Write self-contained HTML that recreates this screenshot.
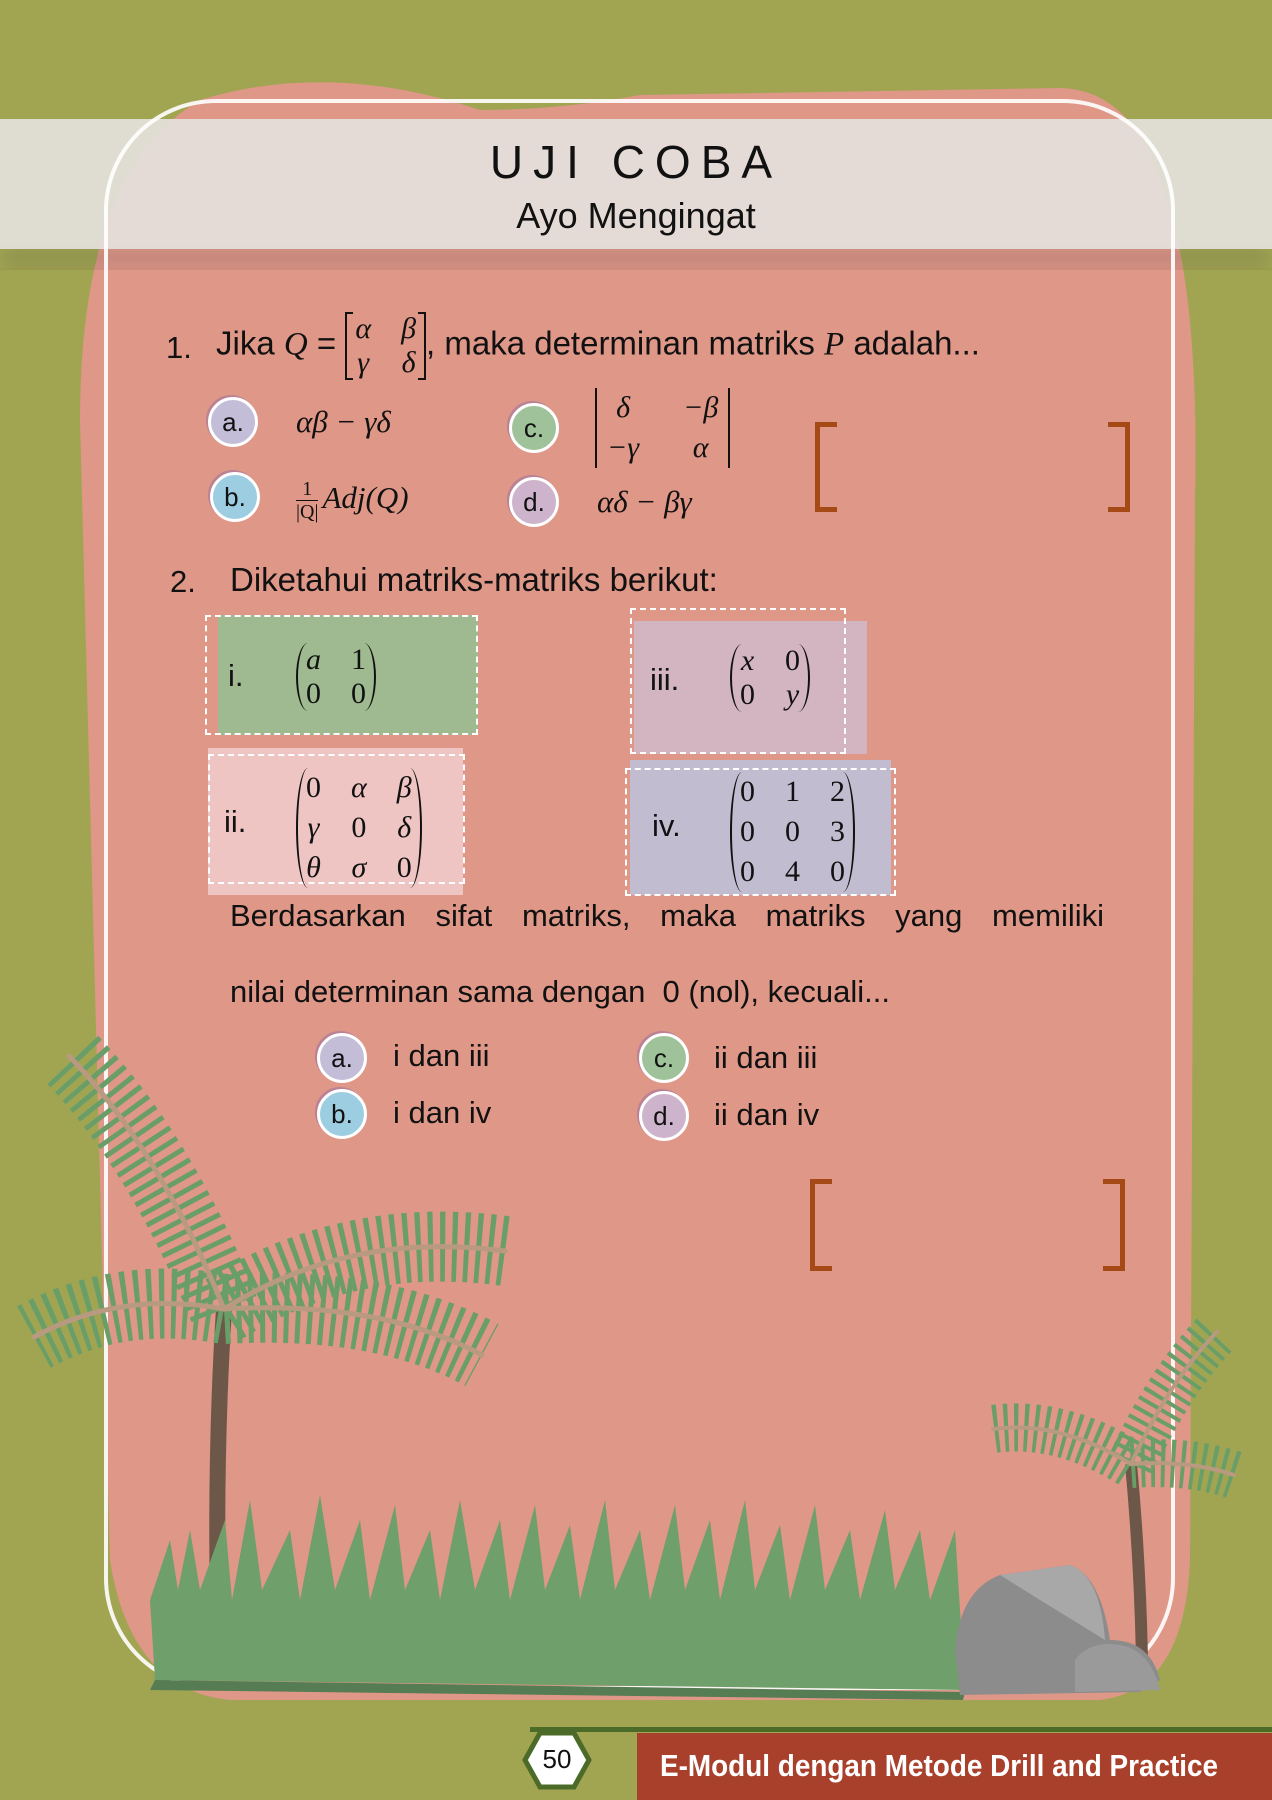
<!DOCTYPE html>
<html><head><meta charset="utf-8"><style>
*{margin:0;padding:0;box-sizing:border-box}
body{width:1272px;height:1800px;position:relative;overflow:hidden;background:#a1a552;font-family:"Liberation Sans",sans-serif;color:#111}
.a{position:absolute}
.t{position:absolute;font-size:31px;white-space:nowrap}
.m{font-family:"Liberation Serif",serif;font-style:italic}
.c{position:absolute;width:50px;height:50px;border-radius:50%;border:3px solid #fff;box-shadow:-2px -2px 0 rgba(150,110,160,.5);font-size:26px;text-align:center;line-height:44px}
.mat{display:inline-grid;position:relative;padding:0 10px;font-family:"Liberation Serif",serif;font-size:30px;line-height:34px;vertical-align:middle;column-gap:30px;text-align:center}
.mat i{font-style:italic}
.mat.p::before,.mat.p::after{content:"";position:absolute;top:0;bottom:0;width:10px;border:2px solid #111}
.mat.p::before{left:0;border-right:none;border-top:none;border-bottom:none;border-radius:12px 0 0 12px/50%}
.mat.p::after{right:0;border-left:none;border-top:none;border-bottom:none;border-radius:0 12px 12px 0/50%}
.mat.b::before,.mat.b::after{content:"";position:absolute;top:0;bottom:0;width:6px;border:2px solid #111}
.mat.b::before{left:0;border-right:none}.mat.b::after{right:0;border-left:none}
.mat.d{border-left:2px solid #111;border-right:2px solid #111}
.box{position:absolute}
.dash{position:absolute;border:2px dashed #fff}
.br{position:absolute;width:22px;border:5px solid #a54a16}
</style></head><body>
<svg class="a" style="left:0;top:0" width="1272" height="1800">
<defs><filter id="sh"><feGaussianBlur stdDeviation="10"/></filter></defs>
<path d="M200 100 Q330 60 480 110 Q560 110 640 95 L1060 88 Q1130 90 1160 180 Q1200 280 1195 500 L1190 1560 Q1185 1690 1100 1700 L230 1700 Q130 1690 110 1560 L80 420 Q80 170 200 100Z" fill="#df9788"/>
<rect x="0" y="248" width="1272" height="20" fill="rgba(60,40,30,.18)" filter="url(#sh)"/>
</svg>
<div class="a" style="left:0;top:119px;width:1272px;height:130px;background:rgba(230,226,223,.9)"></div>
<svg class="a" style="left:0;top:0" width="1272" height="1800"><rect x="106" y="101" width="1067" height="1587" rx="110" fill="none" stroke="rgba(255,255,255,.9)" stroke-width="4"/></svg>
<div class="a" style="left:0;top:132px;width:1272px;text-align:center;font-size:46px;letter-spacing:10px;line-height:60px">UJI COBA</div>
<div class="a" style="left:0;top:192px;width:1272px;text-align:center;font-size:36px;line-height:48px">Ayo Mengingat</div>

<div class="t" style="left:166px;top:330px">1.</div>
<div class="t" style="left:216px;top:312px;line-height:60px;font-size:33px">Jika <span class="m">Q</span> = <span class="mat b" style="grid-template-columns:auto auto"><i>α</i><i>β</i><i>γ</i><i>δ</i></span>, maka determinan matriks <span class="m">P</span> adalah...</div>
<div class="c" style="left:208px;top:397px;background:#c3bdd7">a.</div>
<div class="c" style="left:210px;top:472px;background:#9ccde0">b.</div>
<div class="c" style="left:509px;top:403px;background:#9fc29a">c.</div>
<div class="c" style="left:509px;top:477px;background:#cdb3cb">d.</div>
<div class="t m" style="left:296px;top:404px">αβ − γδ</div>
<div class="t m" style="left:296px;top:478px;line-height:40px"><span style="display:inline-block;vertical-align:middle;text-align:center;font-size:20px;line-height:22px;margin-right:4px;font-style:normal"><span style="display:block;border-bottom:1.5px solid #111">1</span>|Q|</span>Adj(Q)</div>
<div class="t" style="left:595px;top:388px"><span class="mat d" style="grid-template-columns:auto auto;column-gap:44px;line-height:40px"><i>δ</i><i>−β</i><i>−γ</i><i>α</i></span></div>
<div class="t m" style="left:597px;top:484px">αδ − βγ</div>
<div class="br" style="left:815px;top:422px;height:90px;border-right:none"></div>
<div class="br" style="left:1108px;top:422px;height:90px;border-left:none"></div>

<div class="t" style="left:170px;top:564px">2.</div>
<div class="t" style="left:230px;top:561px;font-size:33px">Diketahui matriks-matriks berikut:</div>
<div class="box" style="left:218px;top:615px;width:260px;height:120px;background:#9fba90"></div>
<div class="dash" style="left:205px;top:615px;width:273px;height:120px"></div>
<div class="t" style="left:228px;top:658px">i.</div>
<div class="t" style="left:296px;top:643px"><span class="mat p" style="grid-template-columns:auto auto"><i>a</i><span>1</span><span>0</span><span>0</span></span></div>

<div class="box" style="left:634px;top:621px;width:233px;height:133px;background:#d2b5c0"></div>
<div class="dash" style="left:630px;top:608px;width:216px;height:146px"></div>
<div class="t" style="left:650px;top:662px">iii.</div>
<div class="t" style="left:730px;top:644px"><span class="mat p" style="grid-template-columns:auto auto"><i>x</i><span>0</span><span>0</span><i>y</i></span></div>

<div class="box" style="left:208px;top:748px;width:255px;height:147px;background:#efc5c3"></div>
<div class="dash" style="left:208px;top:754px;width:257px;height:130px"></div>
<div class="t" style="left:224px;top:804px">ii.</div>
<div class="t" style="left:296px;top:768px"><span class="mat p" style="grid-template-columns:auto auto auto;line-height:40px"><span>0</span><i>α</i><i>β</i><i>γ</i><span>0</span><i>δ</i><i>θ</i><i>σ</i><span>0</span></span></div>

<div class="box" style="left:630px;top:760px;width:261px;height:135px;background:#c2bcd0"></div>
<div class="dash" style="left:625px;top:768px;width:271px;height:128px"></div>
<div class="t" style="left:652px;top:808px">iv.</div>
<div class="t" style="left:730px;top:772px"><span class="mat p" style="grid-template-columns:auto auto auto;line-height:40px;column-gap:30px"><span>0</span><span>1</span><span>2</span><span>0</span><span>0</span><span>3</span><span>0</span><span>4</span><span>0</span></span></div>

<div class="t" style="left:230px;top:898px;width:874px;white-space:normal;text-align:justify;text-align-last:justify">Berdasarkan sifat matriks, maka matriks yang memiliki</div>
<div class="t" style="left:230px;top:974px">nilai determinan sama dengan&nbsp; 0 (nol), kecuali...</div>
<div class="c" style="left:317px;top:1033px;background:#c3bdd7">a.</div>
<div class="c" style="left:317px;top:1089px;background:#9ccde0">b.</div>
<div class="c" style="left:639px;top:1033px;background:#9fc29a">c.</div>
<div class="c" style="left:639px;top:1091px;background:#cdb3cb">d.</div>
<div class="t" style="left:393px;top:1038px">i dan iii</div>
<div class="t" style="left:393px;top:1095px">i dan iv</div>
<div class="t" style="left:714px;top:1040px">ii dan iii</div>
<div class="t" style="left:714px;top:1097px">ii dan iv</div>
<div class="br" style="left:810px;top:1179px;height:92px;border-right:none"></div>
<div class="br" style="left:1103px;top:1179px;height:92px;border-left:none"></div>

<svg class="a" style="left:0;top:0" width="1272" height="1800">
<g fill="none">
<path d="M224 1309 Q215 1450 218 1610" stroke="#6d5748" stroke-width="16"/>
<g stroke="#6a9e68" stroke-width="70" stroke-dasharray="5 7" stroke-linecap="butt">
<path d="M224 1309 Q160 1150 69 1056"/>
<path d="M224 1309 Q350 1230 505 1251"/>
<path d="M224 1309 Q120 1290 34 1337"/>
<path d="M224 1309 Q380 1300 482 1355"/>
</g>
<g stroke="#b99a80" stroke-width="5" stroke-linecap="round">
<path d="M224 1309 Q160 1150 69 1056"/>
<path d="M224 1309 Q350 1230 505 1251"/>
<path d="M224 1309 Q120 1290 34 1337"/>
<path d="M224 1309 Q380 1300 482 1355"/>
</g>
<path d="M1131 1464 Q1140 1560 1142 1660" stroke="#6d5748" stroke-width="12"/>
<g stroke="#6a9e68" stroke-width="48" stroke-dasharray="4 6" stroke-linecap="butt">
<path d="M1131 1464 Q1170 1380 1217 1332"/>
<path d="M1131 1464 Q1060 1420 993 1429"/>
<path d="M1131 1464 Q1190 1460 1234 1475"/>
</g>
<g stroke="#b99a80" stroke-width="4" stroke-linecap="round">
<path d="M1131 1464 Q1170 1380 1217 1332"/>
<path d="M1131 1464 Q1060 1420 993 1429"/>
<path d="M1131 1464 Q1190 1460 1234 1475"/>
</g>
</g>
<path d="M155 1680 L150 1600 L170 1540 L178 1590 L190 1530 L200 1590 L225 1520 L232 1600 L250 1500 L262 1590 L290 1530 L300 1600 L320 1495 L335 1590 L360 1520 L370 1600 L395 1505 L405 1590 L430 1530 L440 1600 L460 1500 L475 1590 L500 1520 L510 1600 L535 1505 L545 1590 L570 1525 L580 1600 L605 1500 L615 1590 L640 1530 L650 1600 L675 1505 L685 1590 L710 1520 L720 1600 L745 1500 L755 1590 L780 1525 L790 1600 L815 1505 L825 1590 L850 1530 L860 1600 L885 1510 L895 1590 L920 1530 L930 1600 L955 1530 L965 1690 L155 1680Z" fill="#6f9f6a"/>
<path d="M155 1680 L965 1692 L963 1700 L150 1690Z" fill="#557c52"/>
<path d="M955 1650 Q960 1590 1000 1575 L1070 1565 Q1100 1575 1110 1640 Q1150 1640 1160 1680 L1140 1692 L960 1695Z" fill="#8c8c8c"/>
<path d="M1000 1575 L1070 1565 Q1100 1575 1105 1640 L1040 1600Z" fill="#a8a8a8"/>
<path d="M1075 1660 Q1090 1640 1120 1645 Q1150 1650 1160 1690 L1075 1692Z" fill="#9a9a9a"/>
<rect x="530" y="1727" width="742" height="5" fill="#4c6b28"/>
<rect x="637" y="1733" width="635" height="67" fill="#a8402b"/>
<polygon points="525,1760 540,1733 574,1733 589,1760 574,1787 540,1787" fill="#fff" stroke="#4c6b28" stroke-width="5"/>
</svg>
<div class="a" style="left:525px;top:1744px;width:64px;text-align:center;font-size:26px">50</div>
<div class="a" style="left:660px;top:1748px;color:#fff;font-size:31px;font-weight:bold;white-space:nowrap;transform:scaleX(.9);transform-origin:left">E-Modul dengan Metode Drill and Practice</div>
</body></html>
